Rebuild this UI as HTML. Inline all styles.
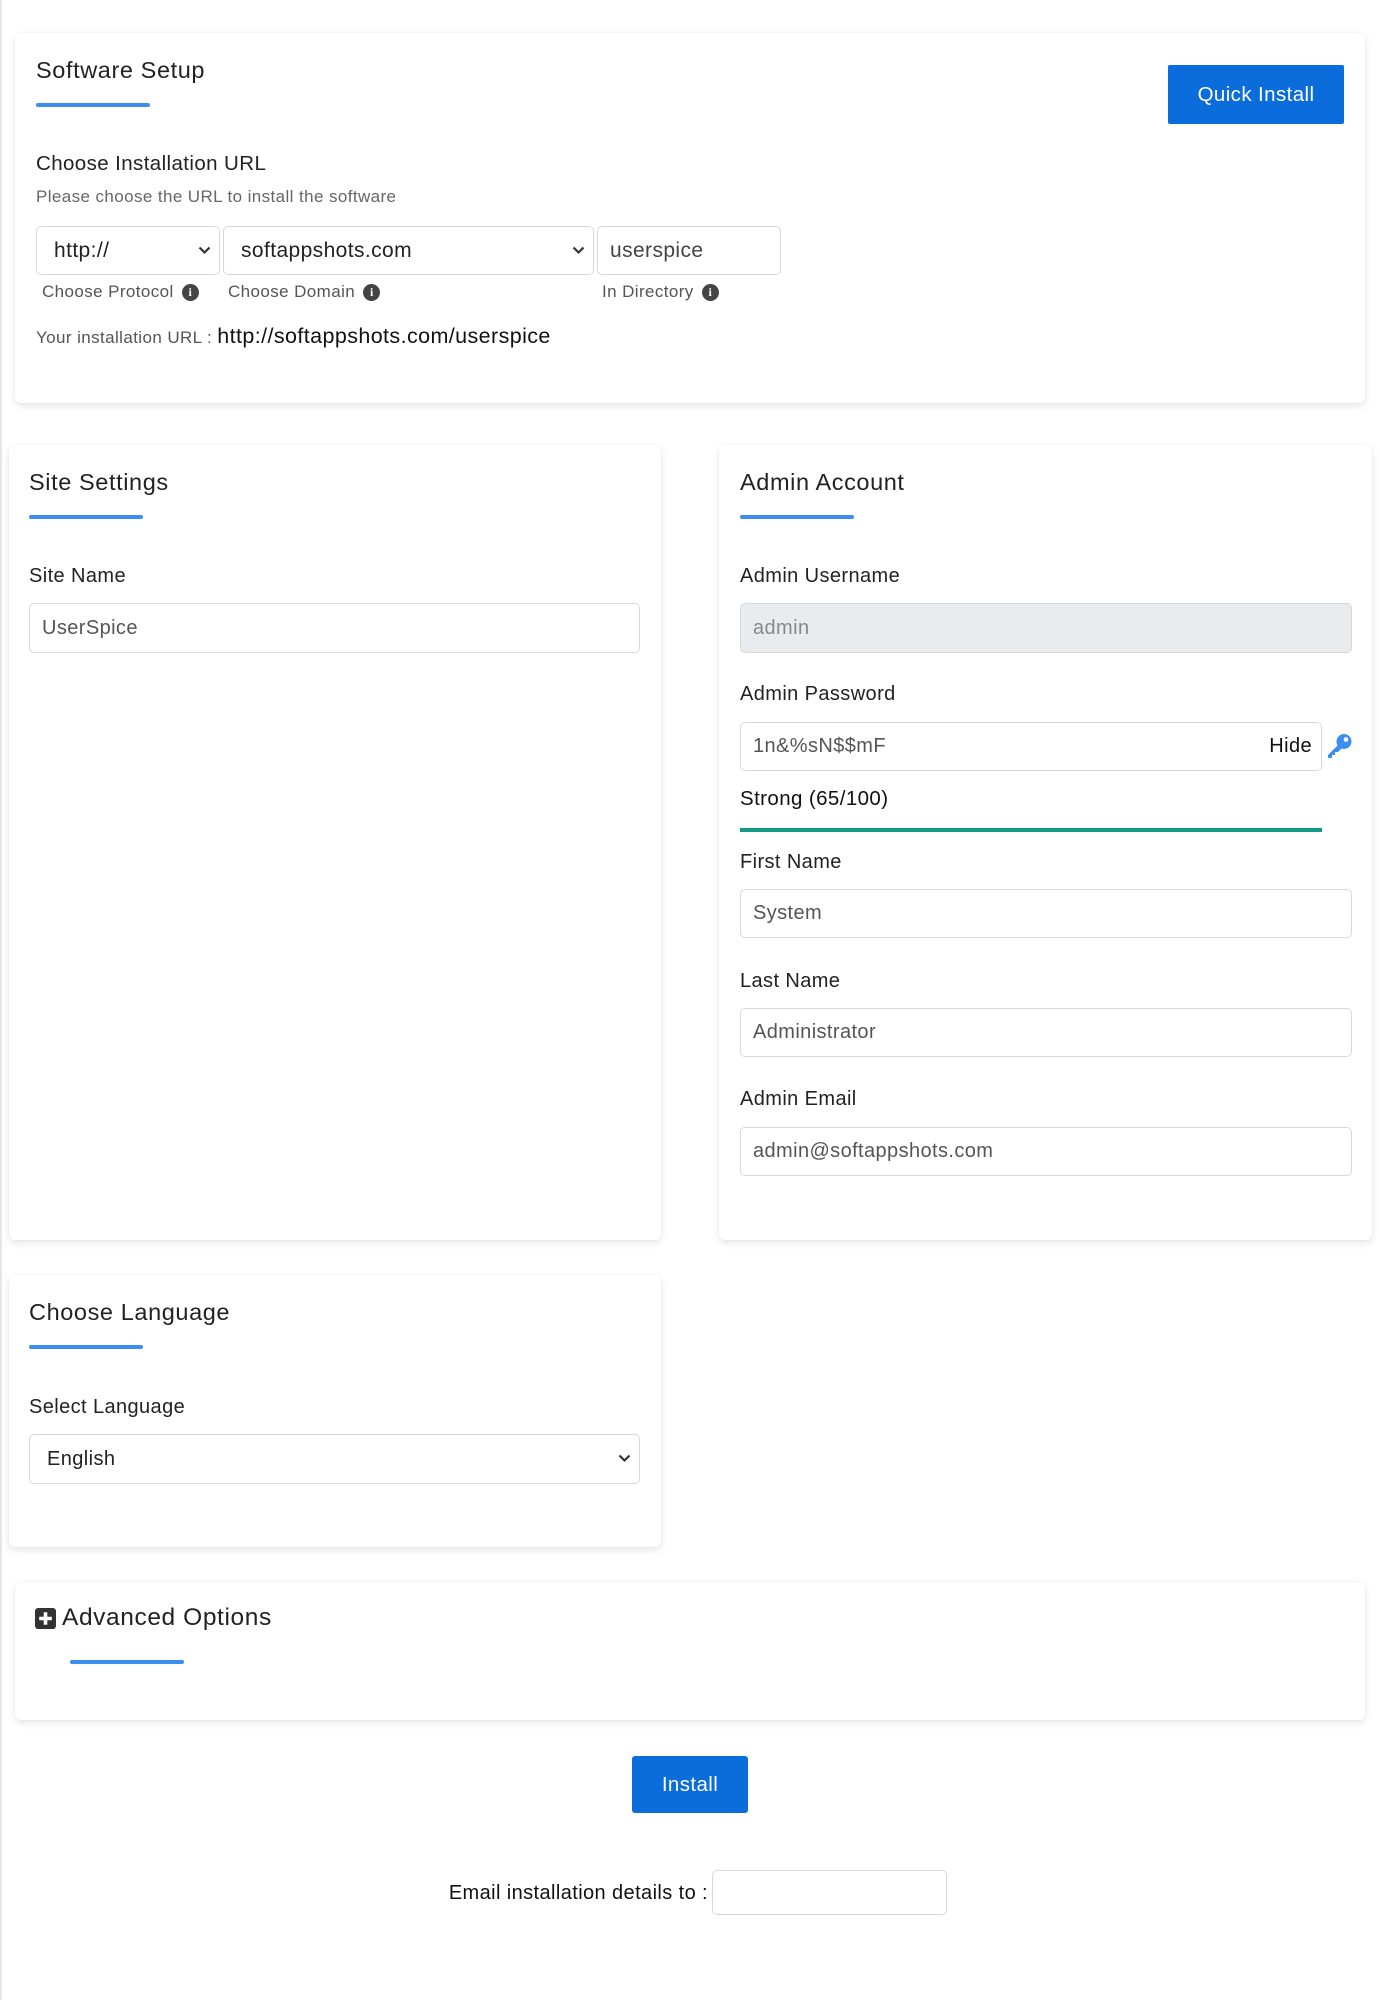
<!DOCTYPE html>
<html><head><meta charset="utf-8"><style>
*{box-sizing:border-box;margin:0;padding:0}
body{width:1380px;height:2000px;background:#fff;font-family:"Liberation Sans",sans-serif;color:#222;position:relative;overflow:hidden;letter-spacing:0.4px}
.a{position:absolute;white-space:nowrap}
.card{position:absolute;background:#fff;border-radius:6px;box-shadow:0 3px 8px rgba(0,0,0,.10),0 0 2px rgba(0,0,0,.05)}
.t{font-size:23.5px;color:#222;letter-spacing:0.6px}
.ul{position:absolute;height:4px;background:#3d8ef0;border-radius:2px}
.lbl{font-size:20px;color:#222}
.in{position:absolute;border:1.5px solid #d6d9dc;border-radius:5px;background:#fff;font-size:20px;color:#555;padding-left:12px;display:flex;align-items:center}
.sm{font-size:17px;color:#555}
.info{display:inline-block;width:17px;height:17px;border-radius:50%;background:#444;color:#fff;font-size:12px;font-weight:bold;text-align:center;line-height:17px;font-family:"Liberation Serif",serif;vertical-align:middle;margin-left:8px;letter-spacing:0}
.chev{position:absolute;right:8px;top:50%;margin-top:-5px}
.btn{position:absolute;background:#0a6ddb;color:#fff;font-size:20.5px;display:flex;align-items:center;justify-content:center;border-radius:2px}
</style></head><body>
<div class="a" style="left:0;top:0;width:2px;height:2000px;background:#e6e6e6"></div>

<div class="card" style="left:15px;top:33px;width:1350px;height:370px"></div>
<div class="a t" style="left:36px;top:57px">Software Setup</div>
<div class="ul" style="left:36px;top:103px;width:114px"></div>
<div class="btn" style="left:1168px;top:65px;width:176px;height:59px">Quick Install</div>
<div class="a" style="left:36px;top:152px;font-size:20.5px">Choose Installation URL</div>
<div class="a" style="left:36px;top:187px;font-size:17px;color:#666">Please choose the URL to install the software</div>

<div class="in" style="left:36px;top:226px;width:184px;height:49px;padding-left:17px;color:#222;font-size:21px">http://<svg class="chev" width="13" height="9" viewBox="0 0 13 9"><path d="M1.5 1.5 6.5 6.5 11.5 1.5" stroke="#333" stroke-width="2.2" fill="none"/></svg></div>
<div class="in" style="left:223px;top:226px;width:371px;height:49px;padding-left:17px;color:#222;font-size:21px">softappshots.com<svg class="chev" width="13" height="9" viewBox="0 0 13 9"><path d="M1.5 1.5 6.5 6.5 11.5 1.5" stroke="#333" stroke-width="2.2" fill="none"/></svg></div>
<div class="in" style="left:597px;top:226px;width:184px;height:49px;color:#444;font-size:21px">userspice</div>

<div class="a sm" style="left:42px;top:282px">Choose Protocol<span class="info">i</span></div>
<div class="a sm" style="left:228px;top:282px">Choose Domain<span class="info">i</span></div>
<div class="a sm" style="left:602px;top:282px">In Directory<span class="info">i</span></div>
<div class="a" style="left:36px;top:324px"><span style="font-size:17px;color:#555">Your installation URL : </span><span style="font-size:21.5px;color:#111">http://softappshots.com/userspice</span></div>

<div class="card" style="left:9px;top:445px;width:652px;height:795px"></div>
<div class="a t" style="left:29px;top:469px">Site Settings</div>
<div class="ul" style="left:29px;top:515px;width:114px"></div>
<div class="a lbl" style="left:29px;top:565px">Site Name</div>
<div class="in" style="left:29px;top:603px;width:611px;height:50px">UserSpice</div>

<div class="card" style="left:719px;top:445px;width:653px;height:795px"></div>
<div class="a t" style="left:740px;top:469px">Admin Account</div>
<div class="ul" style="left:740px;top:515px;width:114px"></div>
<div class="a lbl" style="left:740px;top:565px">Admin Username</div>
<div class="in" style="left:740px;top:603px;width:612px;height:50px;background:#e9ecef;color:#888">admin</div>
<div class="a lbl" style="left:740px;top:683px">Admin Password</div>
<div class="in" style="left:740px;top:722px;width:582px;height:49px">1n&amp;%sN$$mF<span style="position:absolute;right:9px;color:#111;font-size:20px">Hide</span></div>
<svg class="a" style="left:1325px;top:733px" width="28" height="27" viewBox="0 0 28 27"><circle cx="19" cy="8.5" r="7.5" fill="#3d8ef0"/><circle cx="21" cy="6.5" r="2.3" fill="#fff"/><path d="M14 11 3 22 3 25 7 25 7 22 10 22 10 19 13 19 17 15Z" fill="#3d8ef0"/></svg>
<div class="a" style="left:740px;top:787px;font-size:20.5px;color:#111">Strong (65/100)</div>
<div class="a" style="left:740px;top:828px;width:582px;height:4px;background:#139a85"></div>
<div class="a lbl" style="left:740px;top:851px">First Name</div>
<div class="in" style="left:740px;top:889px;width:612px;height:49px">System</div>
<div class="a lbl" style="left:740px;top:970px">Last Name</div>
<div class="in" style="left:740px;top:1008px;width:612px;height:49px">Administrator</div>
<div class="a lbl" style="left:740px;top:1088px">Admin Email</div>
<div class="in" style="left:740px;top:1127px;width:612px;height:49px">admin@softappshots.com</div>

<div class="card" style="left:9px;top:1275px;width:652px;height:272px"></div>
<div class="a t" style="left:29px;top:1299px">Choose Language</div>
<div class="ul" style="left:29px;top:1345px;width:114px"></div>
<div class="a lbl" style="left:29px;top:1396px">Select Language</div>
<div class="in" style="left:29px;top:1434px;width:611px;height:50px;padding-left:17px;color:#222">English<svg class="chev" width="13" height="9" viewBox="0 0 13 9"><path d="M1.5 1.5 6.5 6.5 11.5 1.5" stroke="#333" stroke-width="2.2" fill="none"/></svg></div>

<div class="card" style="left:15px;top:1582px;width:1350px;height:138px"></div>
<svg class="a" style="left:35px;top:1608px" width="21" height="21" viewBox="0 0 20 20"><rect x="0" y="0" width="20" height="20" rx="3" fill="#333"/><path d="M10 4v12M4 10h12" stroke="#fff" stroke-width="3.4"/></svg>
<div class="a t" style="left:62px;top:1604px;font-size:24.5px">Advanced Options</div>
<div class="ul" style="left:70px;top:1660px;width:114px"></div>

<div class="btn" style="left:632px;top:1756px;width:116px;height:57px;border-radius:3px">Install</div>
<div class="a" style="right:672px;top:1882px;font-size:20px;color:#111">Email installation details to :</div>
<div class="in" style="left:712px;top:1870px;width:235px;height:45px"></div>
</body></html>
